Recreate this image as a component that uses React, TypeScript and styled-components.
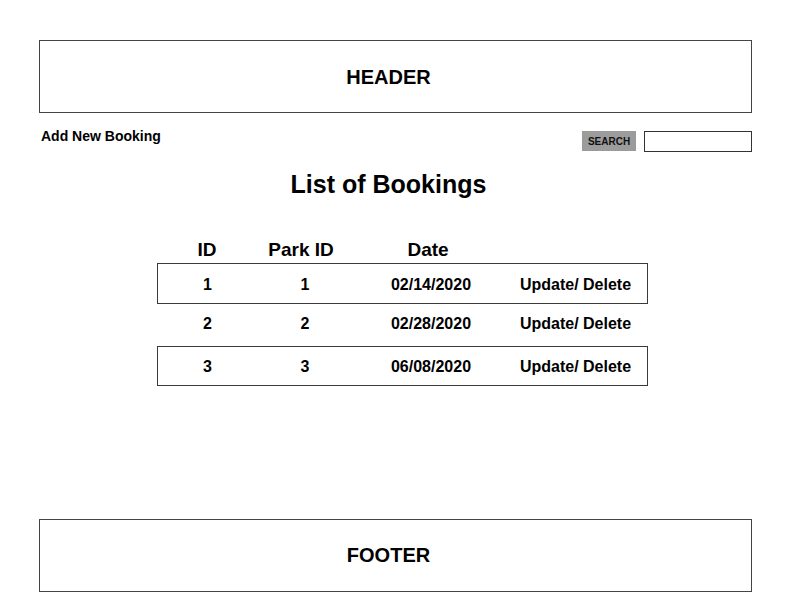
import styled, { createGlobalStyle } from "styled-components";

const GlobalStyle = createGlobalStyle`
  html, body {
    margin: 0;
    padding: 0;
    background: #ffffff;
  }
  body {
    font-family: "Liberation Sans", Arial, sans-serif;
    color: #000;
  }
`;

const Page = styled.div`
  display: flex;
  flex-direction: column;
  min-height: 612px;
  width: 713px;
  margin-left: 39px;
  box-sizing: border-box;
  padding: 40px 0 20px;
`;

const Banner = styled.div<{ $nudge?: number }>`
  box-sizing: border-box;
  height: 73px;
  border: 1px solid #444;
  display: flex;
  align-items: center;
  justify-content: center;
  padding: ${(p) => p.$nudge ?? 0}px 14px 0 0;
  font-size: 20px;
  font-weight: bold;
`;

const Main = styled.main`
  flex: 1;
`;

const Toolbar = styled.div`
  display: flex;
  justify-content: space-between;
  align-items: flex-start;
  margin-top: 14px;
  height: 24px;
`;

const AddLink = styled.a`
  font-size: 14px;
  font-weight: bold;
  line-height: 18px;
  margin-left: 2px;
  color: #000;
  text-decoration: none;
  cursor: pointer;
`;

const SearchGroup = styled.div`
  display: flex;
  align-items: flex-start;
  gap: 8px;
  margin-top: 4px;
`;

const SearchButton = styled.button`
  box-sizing: border-box;
  width: 54px;
  height: 20px;
  padding: 0;
  border: 1px solid #9a9a9a;
  background: #9c9c9c;
  font-family: inherit;
  font-size: 10px;
  font-weight: bold;
  color: #111;
`;

const SearchInput = styled.input`
  box-sizing: border-box;
  width: 108px;
  height: 21px;
  border: 1px solid #333;
  padding: 0 4px;
  font-family: inherit;
  outline: none;
`;

const Title = styled.h1`
  margin: 19px 14px 0 0;
  text-align: center;
  font-size: 25px;
  line-height: 28px;
  font-weight: bold;
`;

const Table = styled.div`
  width: 491px;
  margin: 37px 0 0 118px;
`;

const Row = styled.div<{ $cols: string; $boxed?: boolean; $height: number }>`
  box-sizing: border-box;
  display: grid;
  grid-template-columns: ${(p) => p.$cols};
  align-items: center;
  height: ${(p) => p.$height}px;
  padding: ${(p) => (p.$boxed ? "2px 0 0" : "0 0 3px")};
  border: 1px solid ${(p) => (p.$boxed ? "#3a3a3a" : "transparent")};
`;

const HeadRow = styled(Row)`
  padding: 2px 0 0;
`;

const HeadCell = styled.div`
  text-align: center;
  font-size: 19px;
  font-weight: bold;
`;

const Cell = styled.div`
  text-align: center;
  font-size: 16px;
  font-weight: bold;
`;

const headCols = "98px 90px 164px 1fr";
const bodyCols = "99px 96px 156px 133px";

const bookings = [
  { id: 1, parkId: 1, date: "02/14/2020", height: 41 },
  { id: 2, parkId: 2, date: "02/28/2020", height: 42 },
  { id: 3, parkId: 3, date: "06/08/2020", height: 40 },
];

export default function App() {
  return (
    <>
      <GlobalStyle />
      <Page>
        <Banner $nudge={2}>HEADER</Banner>
        <Main>
          <Toolbar>
            <AddLink>Add New Booking</AddLink>
            <SearchGroup>
              <SearchButton>SEARCH</SearchButton>
              <SearchInput type="text" />
            </SearchGroup>
          </Toolbar>
          <Title>List of Bookings</Title>
          <Table>
            <HeadRow $cols={headCols} $height={28}>
              <HeadCell>ID</HeadCell>
              <HeadCell>Park ID</HeadCell>
              <HeadCell>Date</HeadCell>
              <HeadCell />
            </HeadRow>
            {bookings.map((b, i) => (
              <Row key={b.id} $cols={bodyCols} $boxed={i % 2 === 0} $height={b.height}>
                <Cell>{b.id}</Cell>
                <Cell>{b.parkId}</Cell>
                <Cell>{b.date}</Cell>
                <Cell>Update/ Delete</Cell>
              </Row>
            ))}
          </Table>
        </Main>
        <Banner>FOOTER</Banner>
      </Page>
    </>
  );
}
